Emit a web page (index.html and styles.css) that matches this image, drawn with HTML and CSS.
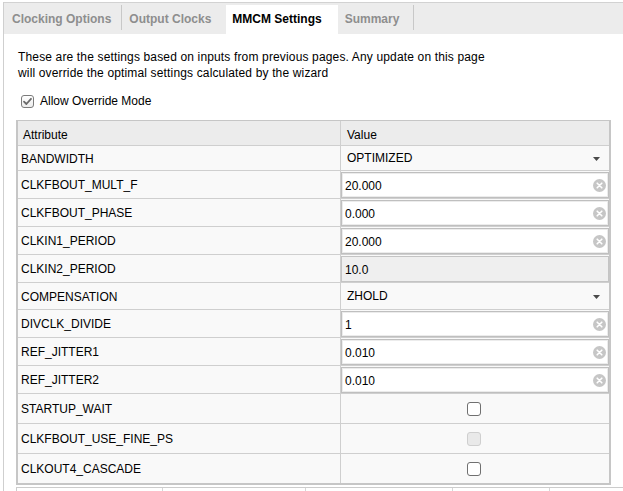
FILE: index.html
```html
<!DOCTYPE html>
<html>
<head>
<meta charset="utf-8">
<title>MMCM Settings</title>
<link rel="stylesheet" href="styles.css">
</head>
<body>
<div class="frame">
  <div class="tabbar">
    <div class="tab sep first">Clocking Options</div>
    <div class="tab second">Output Clocks</div>
    <div class="tab active">MMCM Settings</div>
    <div class="tab sep">Summary</div>
  </div>
  <div class="content">
    <p class="intro">These are the settings based on inputs from previous pages. Any update on this page<br>will override the optimal settings calculated by the wizard</p>
    <div class="override">
      <span class="cb"><svg width="11" height="11" viewBox="0 0 11 11"><path d="M2 5.6 L4.4 8 L9 2.8" fill="none" stroke="#6a6a6a" stroke-width="1.8" stroke-linecap="round" stroke-linejoin="round"/></svg></span>
      <span>Allow Override Mode</span>
    </div>
    <div class="table">
      <div class="row head"><div class="cell">Attribute</div><div class="cell vh">Value</div></div>
      <div class="row combo"><div class="cell">BANDWIDTH</div><div class="cell cv"><span>OPTIMIZED</span><svg class="arrow" width="7" height="4" viewBox="0 0 7 4"><path d="M0 0 H7 L3.5 4 Z" fill="#4a4a4a"/></svg></div></div>
      <div class="row"><div class="cell">CLKFBOUT_MULT_F</div><div class="cell fv"><div class="field"><span>20.000</span><svg class="clr" width="13" height="13" viewBox="0 0 13 13"><circle cx="6.5" cy="6.5" r="6.5" fill="#c6c6c6"/><path d="M4.2 4.2 L8.8 8.8 M8.8 4.2 L4.2 8.8" stroke="#fff" stroke-width="1.6" stroke-linecap="round"/></svg></div></div></div>
      <div class="row"><div class="cell">CLKFBOUT_PHASE</div><div class="cell fv"><div class="field"><span>0.000</span><svg class="clr" width="13" height="13" viewBox="0 0 13 13"><circle cx="6.5" cy="6.5" r="6.5" fill="#c6c6c6"/><path d="M4.2 4.2 L8.8 8.8 M8.8 4.2 L4.2 8.8" stroke="#fff" stroke-width="1.6" stroke-linecap="round"/></svg></div></div></div>
      <div class="row"><div class="cell">CLKIN1_PERIOD</div><div class="cell fv"><div class="field"><span>20.000</span><svg class="clr" width="13" height="13" viewBox="0 0 13 13"><circle cx="6.5" cy="6.5" r="6.5" fill="#c6c6c6"/><path d="M4.2 4.2 L8.8 8.8 M8.8 4.2 L4.2 8.8" stroke="#fff" stroke-width="1.6" stroke-linecap="round"/></svg></div></div></div>
      <div class="row"><div class="cell">CLKIN2_PERIOD</div><div class="cell fv"><div class="field disabled"><span>10.0</span></div></div></div>
      <div class="row combo2"><div class="cell">COMPENSATION</div><div class="cell cv"><span>ZHOLD</span><svg class="arrow" width="7" height="4" viewBox="0 0 7 4"><path d="M0 0 H7 L3.5 4 Z" fill="#4a4a4a"/></svg></div></div>
      <div class="row"><div class="cell">DIVCLK_DIVIDE</div><div class="cell fv"><div class="field"><span>1</span><svg class="clr" width="13" height="13" viewBox="0 0 13 13"><circle cx="6.5" cy="6.5" r="6.5" fill="#c6c6c6"/><path d="M4.2 4.2 L8.8 8.8 M8.8 4.2 L4.2 8.8" stroke="#fff" stroke-width="1.6" stroke-linecap="round"/></svg></div></div></div>
      <div class="row"><div class="cell">REF_JITTER1</div><div class="cell fv"><div class="field"><span>0.010</span><svg class="clr" width="13" height="13" viewBox="0 0 13 13"><circle cx="6.5" cy="6.5" r="6.5" fill="#c6c6c6"/><path d="M4.2 4.2 L8.8 8.8 M8.8 4.2 L4.2 8.8" stroke="#fff" stroke-width="1.6" stroke-linecap="round"/></svg></div></div></div>
      <div class="row"><div class="cell">REF_JITTER2</div><div class="cell fv"><div class="field"><span>0.010</span><svg class="clr" width="13" height="13" viewBox="0 0 13 13"><circle cx="6.5" cy="6.5" r="6.5" fill="#c6c6c6"/><path d="M4.2 4.2 L8.8 8.8 M8.8 4.2 L4.2 8.8" stroke="#fff" stroke-width="1.6" stroke-linecap="round"/></svg></div></div></div>
      <div class="row check"><div class="cell">STARTUP_WAIT</div><div class="cell bv"><span class="box"></span></div></div>
      <div class="row check"><div class="cell">CLKFBOUT_USE_FINE_PS</div><div class="cell bv"><span class="box off"></span></div></div>
      <div class="row check last"><div class="cell">CLKOUT4_CASCADE</div><div class="cell bv"><span class="box"></span></div></div>
    </div>
    <div class="next">
      <div class="nc w1"></div>
      <div class="nc w2"></div>
      <div class="nc w3"></div>
      <div class="nc w4"></div>
      <div class="nc w5"></div>
    </div>
  </div>
</div>
</body>
</html>
```

FILE: styles.css
```css
* { box-sizing: border-box; }
html, body { margin: 0; padding: 0; background: #fff; }
body {
  font-family: "Liberation Sans", Arial, sans-serif;
  font-size: 12px;
  color: #000;
  overflow: hidden;
  height: 491px;
}
.frame {
  margin: 2px 0 0 3px;
  border-left: 1px solid #cfcfcf;
  height: 489px;
}
.tabbar {
  display: flex;
  align-items: flex-start;
  background: #ececec;
  border-top: 1px solid #d2d2d2;
  height: 32px;
  padding-top: 2px;
}
.tab {
  height: 25px;
  padding: 7px 14px 0 7px;
  line-height: 14px;
  font-weight: bold;
  color: #8e8e8e;
  white-space: nowrap;
}
.tab.first { padding-left: 8px; padding-right: 10px; }
.tab.second { padding-right: 15px; }
.tab.sep { border-right: 1px solid #c8c8c8; }
.tab.active {
  height: 29px;
  background: #fff;
  color: #000;
  padding-left: 6px;
  padding-right: 16px;
}
.content {
  padding: 15px 0 0 12px;
}
.intro {
  margin: 0;
  padding-left: 2px;
  line-height: 16px;
  letter-spacing: 0.15px;
}
.override {
  display: flex;
  align-items: center;
  gap: 6px;
  height: 16px;
  margin-top: 12px;
  padding-left: 5px;
}
.cb {
  width: 13px;
  height: 13px;
  border: 1px solid #7b7b7b;
  border-radius: 3px;
  background: linear-gradient(#ffffff, #ececec);
  display: flex;
  align-items: center;
  justify-content: center;
}
.table {
  margin-top: 11px;
  width: 595px;
  border: 2px solid #c6c6c6;
  border-top: 1px solid #c6c6c6;
  background: #f9f9f9;
}
.row {
  display: grid;
  grid-template-columns: 323px 1fr;
  height: 28px;
  border-bottom: 1px solid #cfcfcf;
}
.row.head { height: 25px; background: #ececec; }
.row.combo { height: 25px; }
.row.combo2 { height: 27px; }
.row.check { height: 30px; }
.row.last { height: 29px; border-bottom: none; }
.cell {
  border-right: 1px solid #cfcfcf;
  padding-left: 3px;
  padding-top: 1px;
  display: flex;
  align-items: center;
  white-space: nowrap;
}
.cell:last-child { border-right: none; }
.head .cell { padding-left: 5px; padding-top: 4px; }
.head .vh { padding-left: 6px; }
.cv {
  padding-left: 6px;
  padding-right: 9px;
  padding-top: 0;
  padding-bottom: 1px;
  justify-content: space-between;
}
.cv .arrow { margin-top: 2px; }
.fv {
  padding: 1px 0 0 0;
  align-items: flex-start;
}
.field {
  width: 100%;
  height: 26px;
  background: #fff;
  border: 1px solid #bfbfbf;
  box-shadow: inset 0 0 0 1px #ececec;
  display: flex;
  align-items: center;
  justify-content: space-between;
  padding: 1px 2px 0 3px;
}
.field .clr { margin-top: -1px; }
.field.disabled {
  background: #efefef;
  box-shadow: none;
  border-color: #c4c4c4;
}
.bv {
  justify-content: center;
  padding-left: 0;
  padding-right: 3px;
  padding-top: 0;
}
.box {
  width: 14px;
  height: 14px;
  border: 1px solid #707070;
  border-radius: 3px;
  background: #fff;
}
.box.off {
  border-color: #cfcfcf;
  background: #e9e9e9;
}
.next {
  display: flex;
  margin-top: 2px;
  height: 10px;
  border-top: 1px solid #cccccc;
  border-left: 1px solid #cccccc;
}
.nc { border-right: 1px solid #d6d6d6; height: 100%; }
.w1 { width: 146px; }
.w2 { width: 143px; }
.w3 { width: 147px; }
.w4 { width: 97px; }
.w5 { flex: 1; border-right: none; }
```
